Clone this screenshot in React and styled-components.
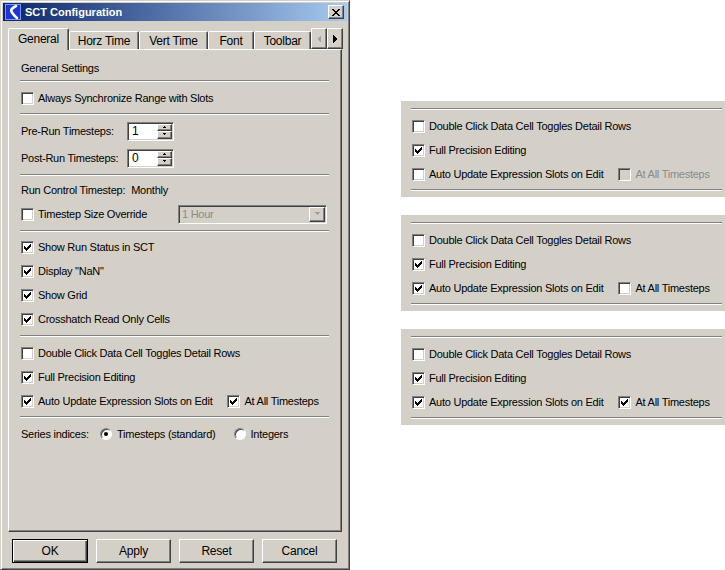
import React from "react";
import styled, { createGlobalStyle } from "styled-components";

const GlobalStyle = createGlobalStyle`
  html, body {
    margin: 0;
    padding: 0;
    background: #fff;
  }
  body {
    font-family: "Liberation Sans", Arial, sans-serif;
    font-size: 11px;
    letter-spacing: -0.25px;
    color: #000;
  }
`;

const face = "#d4d0c8";

const Page = styled.div`
  display: flex;
  align-items: flex-start;
  width: 725px;
  height: 570px;
  overflow: hidden;
`;

const Window = styled.div`
  width: 350px;
  height: 570px;
  box-sizing: border-box;
  flex: none;
  display: flex;
  flex-direction: column;
  padding: 2px;
  background: ${face};
  border: 1px solid;
  border-color: ${face} #404040 #404040 ${face};
  box-shadow: inset 1px 1px #fff, inset -1px -1px #808080;
`;

const TitleBar = styled.div`
  height: 18px;
  display: flex;
  align-items: center;
  padding: 0 3px 0 2px;
  background: linear-gradient(to right, #0a246a, #a6caf0);
`;

const TitleText = styled.span`
  margin-left: 4px;
  flex: 1;
  color: #fff;
  font-weight: bold;
  letter-spacing: 0;
`;

const CloseButton = styled.div`
  width: 16px;
  height: 14px;
  box-sizing: border-box;
  display: flex;
  align-items: center;
  justify-content: center;
  background: ${face};
  border: 1px solid;
  border-color: #fff #404040 #404040 #fff;
  box-shadow: inset -1px -1px #808080;
`;

const TabStrip = styled.div`
  display: flex;
  align-items: flex-end;
  height: 21px;
  margin: 7px 0 0 5px;
`;

const Tab = styled.div`
  position: relative;
  box-sizing: border-box;
  width: ${(p) => p.$width}px;
  height: ${(p) => (p.$active ? 22 : 18)}px;
  margin-bottom: ${(p) => (p.$active ? -1 : 0)}px;
  padding-bottom: ${(p) => (p.$active ? 2 : 0)}px;
  z-index: ${(p) => (p.$active ? 2 : 0)};
  display: flex;
  align-items: center;
  justify-content: center;
  background: ${face};
  border: 1px solid;
  border-bottom: none;
  border-color: #fff #404040 transparent #fff;
  border-radius: 2px 2px 0 0;
  box-shadow: inset -1px 0 #808080;
  font-size: 12px;
`;

const ArrowButton = styled.div`
  width: 16px;
  height: 21px;
  box-sizing: border-box;
  align-self: flex-start;
  display: flex;
  align-items: center;
  justify-content: center;
  background: ${face};
  border: 1px solid;
  border-color: #fff #404040 #404040 #fff;
  box-shadow: inset -1px -1px #808080;
`;

const TabPanel = styled.div`
  position: relative;
  z-index: 1;
  width: 334px;
  height: 483px;
  box-sizing: border-box;
  margin-left: 5px;
  padding: 6px 12px 0 11px;
  display: flex;
  flex-direction: column;
  border: 1px solid;
  border-color: #fff #404040 #404040 #fff;
  box-shadow: inset -1px -1px #808080;
`;

const Separator = styled.div`
  height: 0;
  flex: none;
  border-top: 1px solid #808080;
  border-bottom: 1px solid #fff;
  margin-top: ${(p) => p.$mt ?? 3}px;
  margin-bottom: ${(p) => p.$mb ?? 4}px;
`;

const Stack = styled.div`
  display: flex;
  flex-direction: column;
  gap: ${(p) => p.$gap ?? 0}px;
`;

const Row = styled.div`
  height: 24px;
  display: flex;
  align-items: center;
  padding-left: 1px;
  gap: ${(p) => p.$gap ?? 0}px;
  white-space: nowrap;
`;

const Label = styled.span`
  flex: none;
  width: ${(p) => (p.$width ? `${p.$width}px` : "auto")};
  color: ${(p) => (p.$disabled ? "#8a8a8a" : "#000")};
`;

const Box = styled.span`
  width: 13px;
  height: 13px;
  box-sizing: border-box;
  flex: none;
  display: flex;
  align-items: center;
  justify-content: center;
  background: ${(p) => (p.$disabled ? face : "#fff")};
  border: 1px solid;
  border-color: #808080 #fff #fff #808080;
  box-shadow: inset 1px 1px #404040, inset -1px -1px ${face};
`;

const CheckLabel = styled.label`
  display: flex;
  align-items: center;
  gap: 4px;
  margin-left: ${(p) => p.$ml ?? 0}px;
`;

const Radio = styled.span`
  width: 12px;
  height: 12px;
  box-sizing: border-box;
  flex: none;
  border-radius: 50%;
  display: flex;
  align-items: center;
  justify-content: center;
  background: #fff;
  border: 1px solid;
  border-color: #808080 #fff #fff #808080;
  box-shadow: inset 1px 1px #404040;
`;

const RadioDot = styled.span`
  width: 4px;
  height: 4px;
  border-radius: 50%;
  background: #000;
`;

const RadioLabel = styled.label`
  display: flex;
  align-items: center;
  gap: 5px;
  margin-left: ${(p) => p.$ml ?? 0}px;
`;

const SpinBox = styled.div`
  width: 47px;
  height: 19px;
  box-sizing: border-box;
  display: flex;
  padding: 1px;
  background: #fff;
  border: 1px solid;
  border-color: #808080 #fff #fff #808080;
  box-shadow: inset 1px 1px #404040, inset -1px -1px ${face};
`;

const SpinValue = styled.span`
  flex: 1;
  padding-left: 3px;
  line-height: 15px;
  font-size: 12px;
`;

const SpinButtons = styled.div`
  width: 15px;
  display: flex;
  flex-direction: column;
`;

const SpinButton = styled.div`
  flex: 1;
  box-sizing: border-box;
  display: flex;
  align-items: center;
  justify-content: center;
  background: ${face};
  border: 1px solid;
  border-color: #fff #404040 #404040 #fff;
  box-shadow: inset -1px -1px #808080;
`;

const Combo = styled.div`
  width: 149px;
  height: 19px;
  box-sizing: border-box;
  display: flex;
  align-items: center;
  padding: 1px;
  background: ${face};
  border: 1px solid;
  border-color: #808080 #fff #fff #808080;
  box-shadow: inset 1px 1px #404040, inset -1px -1px ${face};
`;

const ComboText = styled.span`
  flex: 1;
  padding-left: 2px;
  color: #8a8a8a;
`;

const ComboButton = styled.div`
  width: 16px;
  height: 15px;
  box-sizing: border-box;
  display: flex;
  align-items: center;
  justify-content: center;
  background: ${face};
  border: 1px solid;
  border-color: #fff #404040 #404040 #fff;
  box-shadow: inset -1px -1px #808080;
`;

const ButtonRow = styled.div`
  display: flex;
  gap: 8px;
  margin: 7px 0 0 9px;
`;

const Button = styled.div`
  width: ${(p) => (p.$default ? 76 : 75)}px;
  height: 24px;
  box-sizing: border-box;
  display: flex;
  align-items: center;
  justify-content: center;
  font-size: 12px;
  background: ${face};
  border: 1px solid;
  border-color: ${(p) => (p.$default ? "#000" : "#fff #404040 #404040 #fff")};
  box-shadow: ${(p) =>
    p.$default
      ? "inset 1px 1px #fff, inset -1px -1px #404040, inset -2px -2px #808080"
      : "inset -1px -1px #808080"};
`;

const RightColumn = styled.div`
  display: flex;
  flex-direction: column;
  gap: 18px;
  margin: 101px 0 0 51px;
`;

const OptionPanel = styled.div`
  width: 324px;
  box-sizing: border-box;
  padding: 7px 3px 6px 10px;
  display: flex;
  flex-direction: column;
  background: ${face};
`;

const CheckMark = ({ color = "#000" }) => (
  <svg width="7" height="7" viewBox="0 0 7 7" shapeRendering="crispEdges">
    <path
      fill={color}
      d="M6 0h1v1h-1z M5 1h2v1h-2z M0 2h1v1h-1z M4 2h3v1h-3z M0 3h2v1h-2z M3 3h3v1h-3z M0 4h5v1h-5z M1 5h3v1h-3z M2 6h1v1h-1z"
    />
  </svg>
);

const Check = ({ checked, disabled, label, ml }) => (
  <CheckLabel $ml={ml}>
    <Box $disabled={disabled}>{checked && <CheckMark color={disabled ? "#808080" : "#000"} />}</Box>
    <Label $disabled={disabled}>{label}</Label>
  </CheckLabel>
);

const Triangle = ({ dir, color = "#000", size = 4 }) => {
  const pts = {
    up: `0,${size - 1} ${size * 2 - 1},${size - 1} ${size - 0.5},0`,
    down: `0,0 ${size * 2 - 1},0 ${size - 0.5},${size - 1}`,
    left: `${size},0 ${size},${size * 2} 0,${size}`,
    right: `0,0 0,${size * 2} ${size},${size}`,
  }[dir];
  const vertical = dir === "up" || dir === "down";
  return (
    <svg
      width={vertical ? size * 2 - 1 : size}
      height={vertical ? size : size * 2}
      shapeRendering="crispEdges"
    >
      <polygon points={pts} fill={color} />
    </svg>
  );
};

const AppIcon = () => (
  <svg width="16" height="16" viewBox="0 0 16 16">
    <rect x="0" y="0" width="16" height="16" fill="#1c34d8" />
    <rect x="0.5" y="0.5" width="15" height="15" fill="none" stroke="#7f94ff" />
    <path
      d="M11 2 C7 4 5 6 7 8.5 C8.5 10.5 9 12 12 14"
      fill="none"
      stroke="#fff"
      strokeWidth="2.6"
      strokeLinecap="round"
    />
  </svg>
);

const Spinner = ({ value }) => (
  <SpinBox>
    <SpinValue>{value}</SpinValue>
    <SpinButtons>
      <SpinButton>
        <Triangle dir="up" size={3} />
      </SpinButton>
      <SpinButton>
        <Triangle dir="down" size={3} />
      </SpinButton>
    </SpinButtons>
  </SpinBox>
);

const EditOptions = ({ autoUpdate, allSteps }) => (
  <>
    <Row>
      <Check label="Double Click Data Cell Toggles Detail Rows" />
    </Row>
    <Row>
      <Check checked label="Full Precision Editing" />
    </Row>
    <Row>
      <Check checked={autoUpdate} label="Auto Update Expression Slots on Edit" />
      <Check checked={allSteps} disabled={!autoUpdate} label="At All Timesteps" ml={15} />
    </Row>
  </>
);

const tabs = [
  { name: "General", width: 61, active: true },
  { name: "Horz Time", width: 70 },
  { name: "Vert Time", width: 69 },
  { name: "Font", width: 46 },
  { name: "Toolbar", width: 57 },
];

const variants = [
  { autoUpdate: false, allSteps: false },
  { autoUpdate: true, allSteps: false },
  { autoUpdate: true, allSteps: true },
];

export default function App() {
  return (
    <>
      <GlobalStyle />
      <Page>
        <Window>
          <TitleBar>
            <AppIcon />
            <TitleText>SCT Configuration</TitleText>
            <CloseButton>
              <svg width="8" height="7" viewBox="0 0 8 7" shapeRendering="crispEdges">
                <path
                  fill="#000"
                  d="M0 0h2v1h-2z M6 0h2v1h-2z M1 1h2v1h-2z M5 1h2v1h-2z M2 2h4v1h-4z M3 3h2v1h-2z M2 4h4v1h-4z M1 5h2v1h-2z M5 5h2v1h-2z M0 6h2v1h-2z M6 6h2v1h-2z"
                />
              </svg>
            </CloseButton>
          </TitleBar>

          <TabStrip>
            {tabs.map((t) => (
              <Tab key={t.name} $width={t.width} $active={t.active}>
                {t.name}
              </Tab>
            ))}
            <ArrowButton>
              <Triangle dir="left" color="#a0a0a0" />
            </ArrowButton>
            <ArrowButton>
              <Triangle dir="right" />
            </ArrowButton>
          </TabStrip>

          <TabPanel>
            <Row>
              <Label>General Settings</Label>
            </Row>
            <Separator $mt={0} />
            <Row>
              <Check label="Always Synchronize Range with Slots" />
            </Row>
            <Separator />
            <Stack $gap={3}>
              <Row>
                <Label $width={106}>Pre-Run Timesteps:</Label>
                <Spinner value="1" />
              </Row>
              <Row>
                <Label $width={106}>Post-Run Timesteps:</Label>
                <Spinner value="0" />
              </Row>
            </Stack>
            <Separator $mt={4} $mb={2} />
            <Row $gap={6}>
              <Label>Run Control Timestep:</Label>
              <Label>Monthly</Label>
            </Row>
            <Row>
              <Label $width={157}>
                <Check label="Timestep Size Override" />
              </Label>
              <Combo>
                <ComboText>1 Hour</ComboText>
                <ComboButton>
                  <Triangle dir="down" color="#a0a0a0" />
                </ComboButton>
              </Combo>
            </Row>
            <Separator $mt={4} $mb={3} />
            <Row>
              <Check checked label="Show Run Status in SCT" />
            </Row>
            <Row>
              <Check checked label={'Display "NaN"'} />
            </Row>
            <Row>
              <Check checked label="Show Grid" />
            </Row>
            <Row>
              <Check checked label="Crosshatch Read Only Cells" />
            </Row>
            <Separator $mt={4} />
            <EditOptions autoUpdate allSteps />
            <Separator />
            <Row>
              <Label $width={79}>Series indices:</Label>
              <RadioLabel>
                <Radio>
                  <RadioDot />
                </Radio>
                <Label>Timesteps (standard)</Label>
              </RadioLabel>
              <RadioLabel $ml={18}>
                <Radio />
                <Label>Integers</Label>
              </RadioLabel>
            </Row>
          </TabPanel>

          <ButtonRow>
            <Button $default>OK</Button>
            <Button>Apply</Button>
            <Button>Reset</Button>
            <Button>Cancel</Button>
          </ButtonRow>
        </Window>

        <RightColumn>
          {variants.map((v, i) => (
            <OptionPanel key={i}>
              <Separator $mt={0} />
              <EditOptions autoUpdate={v.autoUpdate} allSteps={v.allSteps} />
              <Separator $mb={0} />
            </OptionPanel>
          ))}
        </RightColumn>
      </Page>
    </>
  );
}
